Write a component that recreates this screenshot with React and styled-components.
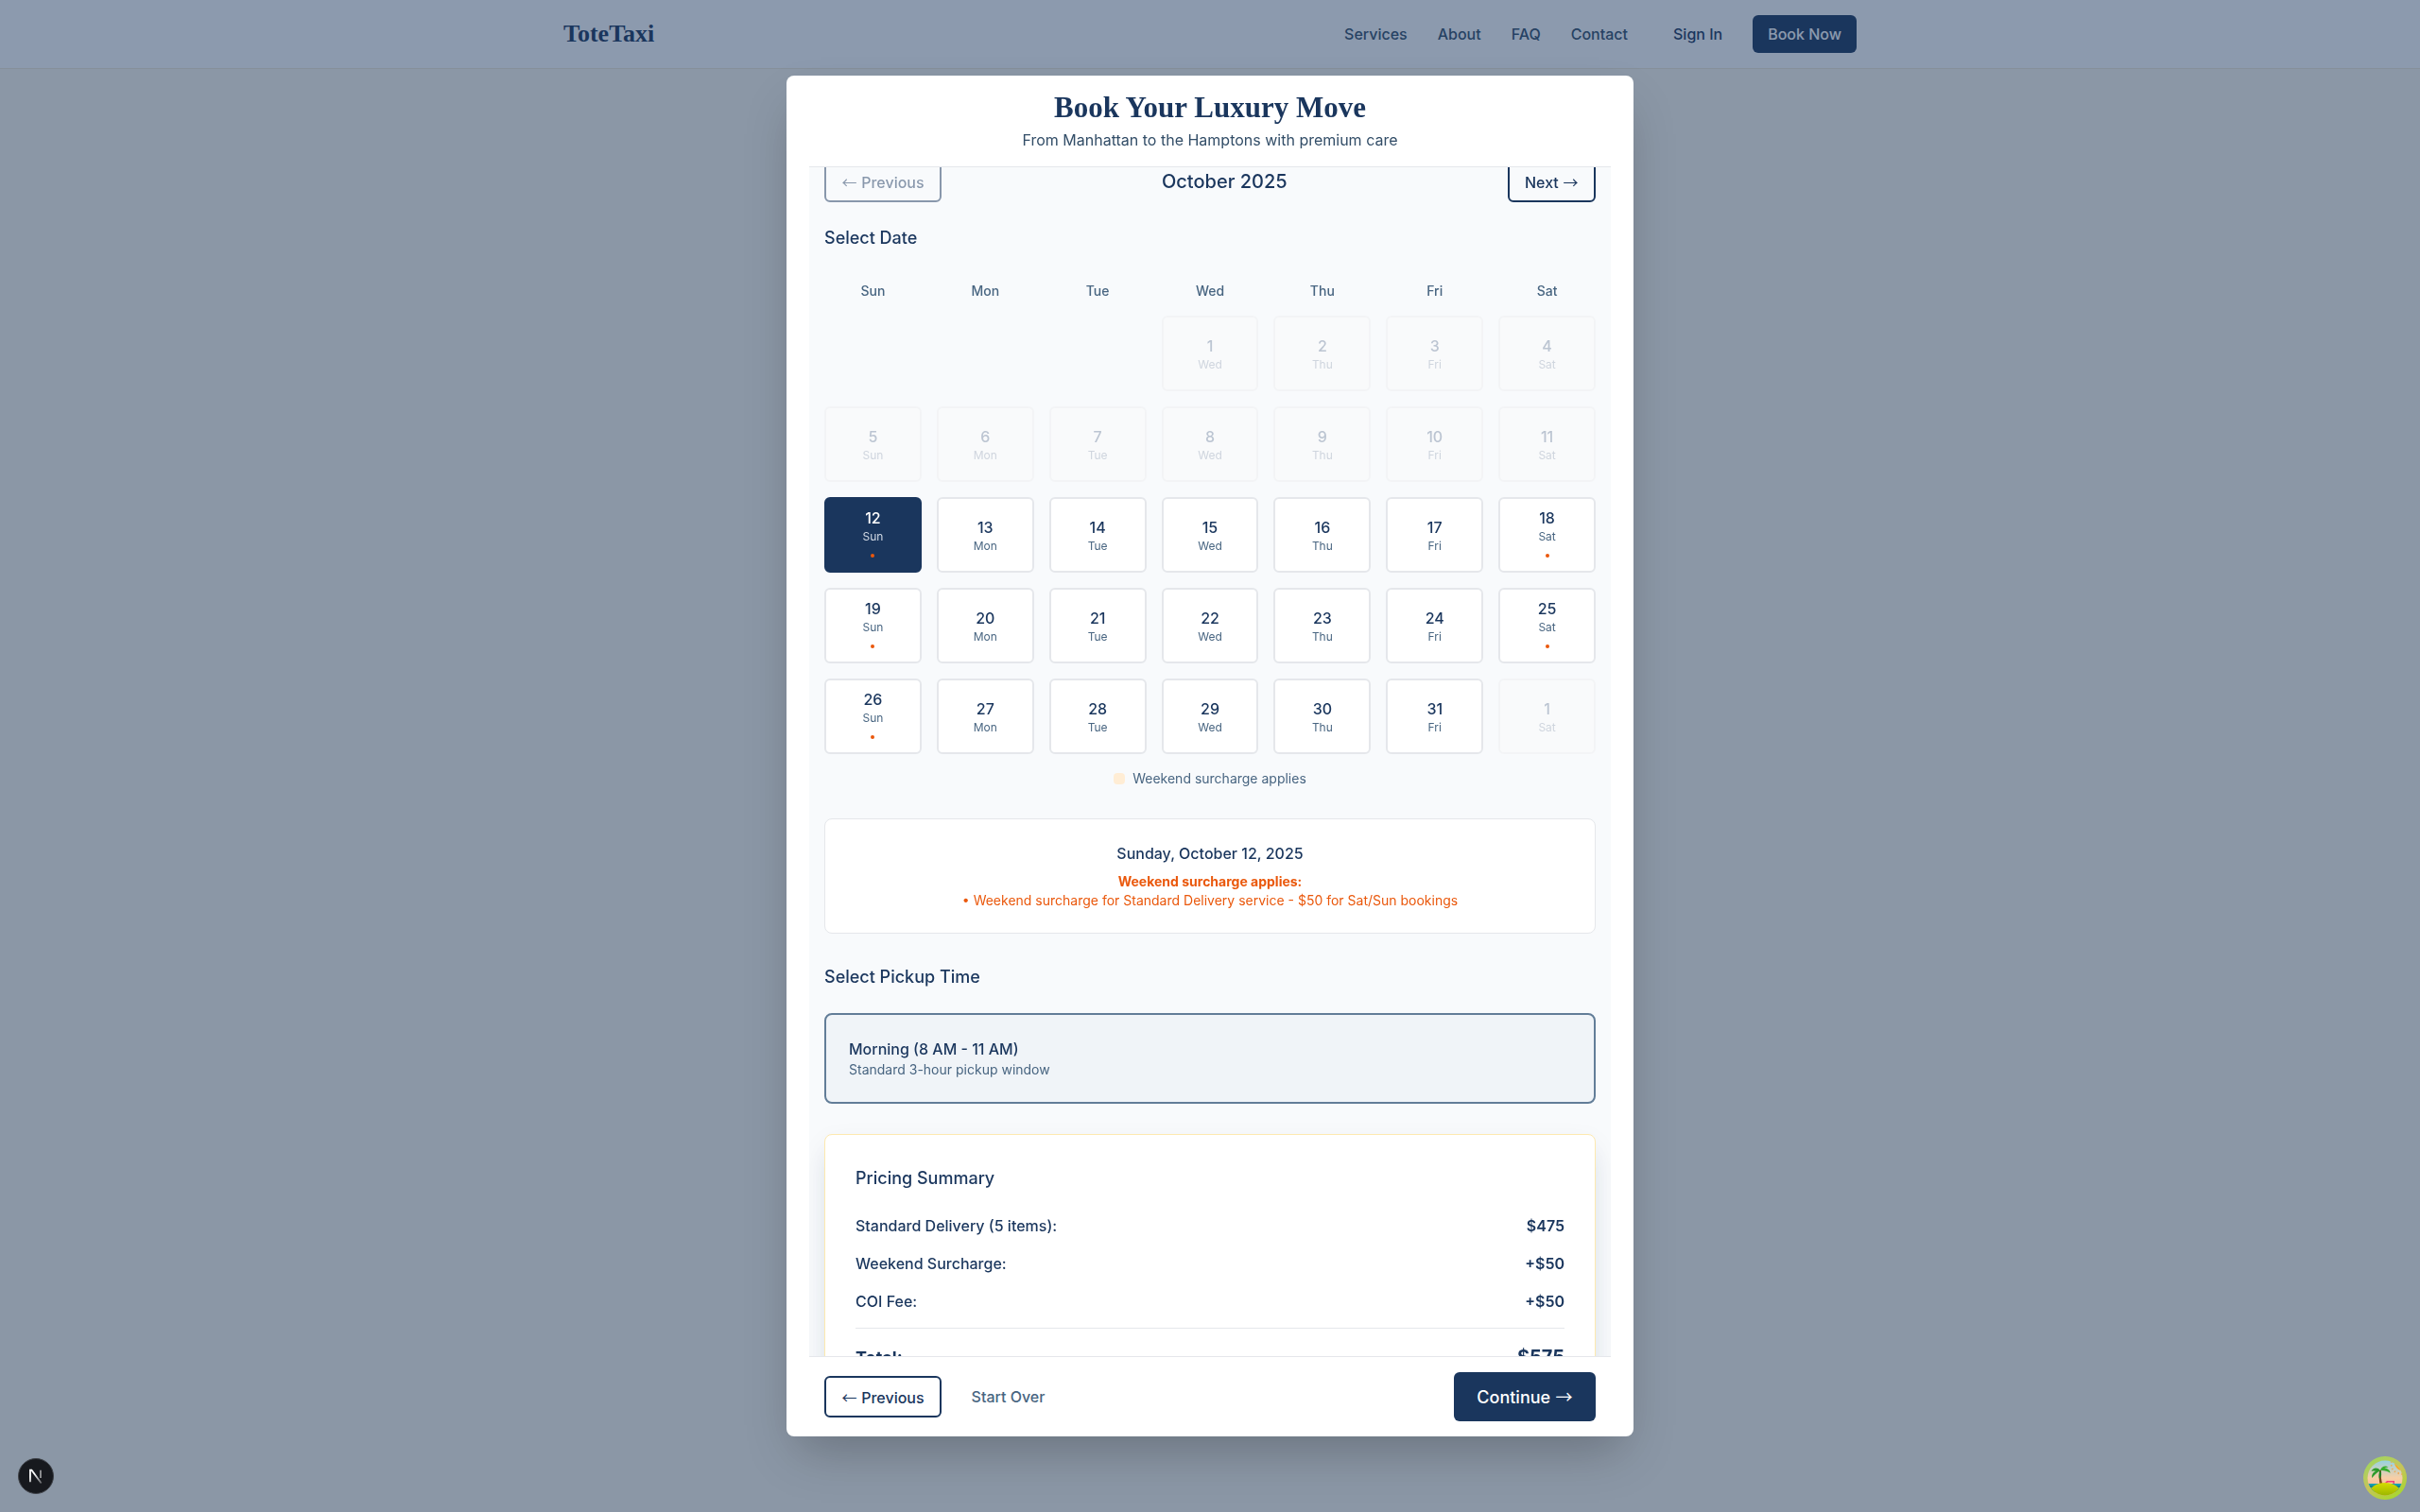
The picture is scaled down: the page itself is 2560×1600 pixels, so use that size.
import React from 'react';
import styled, { createGlobalStyle } from 'styled-components';

const GlobalStyle = createGlobalStyle`
  html, body {
    margin: 0;
    padding: 0;
    height: 100%;
    font-family: Inter, "Liberation Sans", sans-serif;
    color: #1a365d;
  }
  * {
    box-sizing: border-box;
  }
`;

/* ──────────────  Page behind the dialog  ────────────── */

const Page = styled.div`
  min-height: 1600px;
  background: #fdf9ee;
`;

const NavBar = styled.nav`
  height: 73px;
  background: #ffffff;
  border-bottom: 1px solid #f3e9d6;
`;

const NavInner = styled.div`
  width: 1400px;
  height: 72px;
  margin: 0 auto;
  padding: 0 16px;
  display: flex;
  align-items: center;
  justify-content: space-between;
`;

const Logo = styled.div`
  font-family: "Liberation Serif", serif;
  font-size: 26px;
  font-weight: 700;
  color: #1a365d;
`;

const NavLinks = styled.div`
  display: flex;
  align-items: center;
  gap: 32px;
`;

const NavLink = styled.a`
  font-size: 16px;
  font-weight: 500;
  line-height: 24px;
  color: #334e68;
`;

const NavActions = styled.div`
  display: flex;
  align-items: center;
  gap: 16px;
  margin-left: 32px;
`;

const SignIn = styled.a`
  padding: 8px 16px;
  font-size: 16px;
  font-weight: 500;
  line-height: 24px;
  color: #1a365d;
`;

const BookNow = styled.a`
  height: 40px;
  padding: 8px 16px;
  border-radius: 6px;
  background: #1a365d;
  color: #ffffff;
  font-size: 16px;
  font-weight: 500;
  line-height: 24px;
`;

const NavRight = styled.div`
  display: flex;
  align-items: center;
`;

/* ──────────────  Dialog  ────────────── */

const Overlay = styled.div`
  position: fixed;
  inset: 0;
  background: rgba(26, 54, 93, 0.5);
  display: flex;
  align-items: center;
  justify-content: center;
`;

const Modal = styled.div`
  width: 896px;
  height: 1440px;
  padding: 0 24px;
  background: #ffffff;
  border-radius: 8px;
  box-shadow: 0 25px 50px -12px rgba(0, 0, 0, 0.25);
  display: flex;
  flex-direction: column;
  overflow: hidden;
`;

const ModalHeader = styled.header`
  flex: none;
  height: 97px;
  padding-top: 16px;
  text-align: center;
  border-bottom: 1px solid #e5e7eb;
`;

const ModalTitle = styled.h1`
  margin: 0 0 4px;
  font-family: "Liberation Serif", serif;
  font-size: 31px;
  font-weight: 700;
  line-height: 36px;
  color: #1a365d;
`;

const ModalSubtitle = styled.p`
  margin: 0;
  font-size: 16px;
  line-height: 24px;
  color: #334e68;
`;

const ModalBody = styled.div`
  flex: 1;
  min-height: 0;
  overflow: hidden;
  background: #f8fafc;
`;

/* body is scrolled a little in the reference */
const BodyInner = styled.div`
  margin-top: -7px;
  padding: 0 16px;
`;

const MonthRow = styled.div`
  display: flex;
  align-items: center;
  justify-content: space-between;
  margin-bottom: 24px;
`;

const MonthLabel = styled.h3`
  margin: 0;
  font-size: 20px;
  font-weight: 500;
  line-height: 28px;
  color: #1a365d;
`;

// the arrows come from a fallback font, long and thin
const Arrow = styled.span`
  padding: 0 0.03em;
  font-family: "Noto Sans CJK JP", sans-serif;
  font-weight: 400;
`;

const OutlineButton = styled.button`
  height: 44px;
  padding: 0 16px;
  border: 2px solid #1a365d;
  border-radius: 6px;
  background: transparent;
  color: #1a365d;
  font-family: inherit;
  font-size: 16px;
  font-weight: 500;
  line-height: 24px;
  opacity: ${(p) => (p.$disabled ? 0.5 : 1)};
`;

const SectionTitle = styled.h3`
  margin: 0;
  font-size: 18px;
  font-weight: 500;
  line-height: 28px;
  color: #1a365d;
`;

const WeekHeader = styled.div`
  display: grid;
  grid-template-columns: repeat(7, 1fr);
  gap: 16px;
  margin: 32px 0 16px;
`;

const WeekDay = styled.div`
  text-align: center;
  font-size: 14px;
  font-weight: 500;
  line-height: 20px;
  color: #486581;
`;

const CalendarGrid = styled.div`
  display: grid;
  grid-template-columns: repeat(7, 1fr);
  grid-auto-rows: 80px;
  gap: 16px;
`;

const DayCell = styled.div`
  display: flex;
  flex-direction: column;
  align-items: center;
  justify-content: center;
  border-radius: 6px;
  border: 2px solid
    ${(p) => (p.$selected ? '#1a365d' : p.$disabled ? '#f3f4f6' : '#e5e7eb')};
  background: ${(p) =>
    p.$selected ? '#1a365d' : p.$disabled ? '#f9fafb' : '#ffffff'};
`;

const DayNumber = styled.div`
  font-size: 16px;
  font-weight: 500;
  line-height: 24px;
  color: ${(p) =>
    p.$selected ? '#ffffff' : p.$disabled ? '#bcc5d2' : '#1a365d'};
`;

const DayName = styled.div`
  font-size: 12px;
  line-height: 16px;
  color: ${(p) =>
    p.$selected ? '#d1d9e4' : p.$disabled ? '#cfd5de' : '#486581'};
`;

const DotRow = styled.div`
  height: 20px;
  padding-top: 10px;
`;

const Dot = styled.div`
  width: 4px;
  height: 4px;
  border-radius: 50%;
  background: #ea580c;
`;

const Legend = styled.div`
  display: flex;
  align-items: center;
  justify-content: center;
  gap: 8px;
  margin-top: 16px;
  font-size: 14px;
  line-height: 20px;
  color: #486581;
`;

const LegendSwatch = styled.span`
  width: 12px;
  height: 12px;
  border-radius: 4px;
  background: #ffedd5;
`;

const InfoBox = styled.div`
  margin: 32px 0;
  padding: 24px;
  background: #ffffff;
  border: 1px solid #e5e7eb;
  border-radius: 8px;
  text-align: center;
`;

const InfoDate = styled.div`
  margin-bottom: 8px;
  font-size: 16px;
  font-weight: 500;
  line-height: 24px;
  color: #1a365d;
`;

const InfoStrong = styled.div`
  font-size: 14px;
  font-weight: 700;
  line-height: 20px;
  color: #ea580c;
`;

const InfoLine = styled.div`
  font-size: 14px;
  line-height: 20px;
  color: #ea580c;
`;

const TimeOption = styled.div`
  margin: 24px 0 32px;
  padding: 24px;
  height: 96px;
  background: #f0f4f8;
  border: 2px solid #627d98;
  border-radius: 8px;
`;

const TimeTitle = styled.div`
  font-size: 16px;
  font-weight: 500;
  line-height: 24px;
  color: #1a365d;
`;

const TimeNote = styled.div`
  font-size: 14px;
  line-height: 20px;
  color: #486581;
`;

const PricingCard = styled.section`
  padding: 32px;
  background: #ffffff;
  border: 1px solid #fde9b0;
  border-radius: 8px;
  box-shadow: 0 20px 25px -5px rgba(26, 54, 93, 0.1),
    0 10px 30px 0 rgba(26, 54, 93, 0.06);
`;

const PriceRows = styled.div`
  display: flex;
  flex-direction: column;
  gap: 16px;
  margin-top: 24px;
`;

const PriceRow = styled.div`
  display: flex;
  justify-content: space-between;
  font-size: 16px;
  font-weight: 500;
  line-height: 24px;
  color: #1a365d;
`;

const PriceAmount = styled.span`
  font-weight: 600;
`;

const PriceTotal = styled.div`
  display: flex;
  justify-content: space-between;
  align-items: baseline;
  margin-top: 16px;
  padding-top: 16px;
  border-top: 1px solid #e5e7eb;
  font-size: 18px;
  font-weight: 700;
  line-height: 28px;
  color: #1a365d;
`;

const TotalAmount = styled.span`
  font-size: 20px;
`;

const ModalFooter = styled.footer`
  flex: none;
  height: 85px;
  padding: 16px;
  border-top: 1px solid #e5e7eb;
  background: #ffffff;
  display: flex;
  align-items: center;
  justify-content: space-between;
`;

const FooterLeft = styled.div`
  display: flex;
  align-items: center;
  gap: 16px;
`;

const GhostButton = styled.button`
  height: 44px;
  padding: 0 16px;
  border: none;
  background: transparent;
  color: #486581;
  font-family: inherit;
  font-size: 16px;
  font-weight: 500;
`;

const ContinueButton = styled.button`
  height: 52px;
  padding: 0 24px;
  border: none;
  border-radius: 6px;
  background: #1a365d;
  color: #ffffff;
  font-family: inherit;
  font-size: 18px;
  font-weight: 500;
  line-height: 28px;
`;

/* ──────────────  Corner badges  ────────────── */

const DevBadge = styled.div`
  position: fixed;
  left: 19px;
  bottom: 19px;
  width: 38px;
  height: 38px;
  border-radius: 50%;
  background: #17191e;
  border: 1px solid #3f4248;
  display: flex;
  align-items: center;
  justify-content: center;
`;

const HelperBadge = styled.div`
  position: fixed;
  right: 14px;
  bottom: 13px;
  width: 46px;
  height: 46px;
`;

const NextMark = () => (
  <svg width="22" height="22" viewBox="0 0 16 16" fill="none">
    <defs>
      <linearGradient id="nextFade" x1="7" y1="6" x2="13" y2="14" gradientUnits="userSpaceOnUse">
        <stop stopColor="#fff" />
        <stop offset="1" stopColor="#fff" stopOpacity="0.25" />
      </linearGradient>
    </defs>
    <path d="M3.6 12.6V3.4h1.1l7.4 10" stroke="url(#nextFade)" strokeWidth="1.3" />
    <path d="M11.6 3.4v6" stroke="#fff" strokeOpacity="0.6" strokeWidth="1.2" />
  </svg>
);

const IslandIcon = () => (
  <svg width="46" height="46" viewBox="0 0 46 46">
    <defs>
      <linearGradient id="rim" x1="0.2" y1="0" x2="0.8" y2="1">
        <stop offset="0" stopColor="#9fd65f" />
        <stop offset="0.5" stopColor="#c6c45a" />
        <stop offset="1" stopColor="#a4d92a" />
      </linearGradient>
      <linearGradient id="sky" x1="0" y1="0" x2="0" y2="1">
        <stop offset="0" stopColor="#7ed2ee" />
        <stop offset="0.5" stopColor="#f7cfa6" />
        <stop offset="1" stopColor="#ff9d86" />
      </linearGradient>
      <linearGradient id="hill" x1="0" y1="0" x2="0" y2="1">
        <stop offset="0" stopColor="#d6dc00" />
        <stop offset="1" stopColor="#6e9900" />
      </linearGradient>
      <clipPath id="disc">
        <circle cx="23" cy="23" r="18.5" />
      </clipPath>
    </defs>
    <circle cx="23" cy="23" r="23" fill="url(#rim)" />
    <g clipPath="url(#disc)">
      <rect x="0" y="0" width="46" height="46" fill="url(#sky)" />
      {/* sun with its rays */}
      <path d="M33 4c-1 6 3 11 10 12V4z" fill="#f7a823" />
      <path
        d="M29 6l1.5.5M29 10l1.5-.3M30 14l1.5-1M33 17l1-1.5M37 19l.4-2M41 20l-.1-2"
        stroke="#f3a64a"
        strokeWidth="1.3"
      />
      {/* sea */}
      <rect x="0" y="29" width="46" height="9" fill="#169fb3" />
      <path d="M0 32h46M0 35h46" stroke="#0b5f74" strokeWidth="1" />
      {/* deck chair */}
      <path d="M22 29l3-3h8v3h-1.500v-1.600h-5.500l-2 1.600z" fill="#ef3f7a" />
      {/* palm */}
      <path d="M17 15c-.6 5-.4 10 .6 15h2.800c-1.500-5-2-10-1.400-15z" fill="#7b4a1c" />
      <path d="M18 15c-3-4-8-3-9.500 1 3-1 4-.4 5-.2-3 1-5 4-4.200 7.200 2-3 4.500-5 8.700-8z" fill="#2c9a2a" />
      <path d="M18 15c1-4 5-5.500 8.500-3.500-2 0-3 .8-4 1.200 3 0 6 2 6 5-3-2-6.500-3-10.500-2.700z" fill="#36ad2e" />
      <path d="M18 15c-1.200 3-2 6-1 9 2-2 3-6 1-9z" fill="#1f8424" />
      {/* island */}
      <ellipse cx="23" cy="40" rx="17" ry="12" fill="url(#hill)" />
    </g>
  </svg>
);

/* ──────────────  Data  ────────────── */

const weekDays = ['Sun', 'Mon', 'Tue', 'Wed', 'Thu', 'Fri', 'Sat'];

// 35 cells, October 2025 starts on a Wednesday, the last one spills into November
const calendarDays = [
  null,
  null,
  null,
  ...Array.from({ length: 31 }, (_, i) => ({ day: i + 1, dow: (i + 3) % 7 })),
  { day: 1, dow: 6, spill: true },
].map((d) =>
  d && {
    ...d,
    disabled: d.spill || d.day < 12,
    selected: !d.spill && d.day === 12,
    weekend: !d.spill && d.day >= 12 && (d.dow === 0 || d.dow === 6),
  }
);

const priceRows = [
  { label: 'Standard Delivery (5 items):', amount: '$475' },
  { label: 'Weekend Surcharge:', amount: '+$50' },
  { label: 'COI Fee:', amount: '+$50' },
];

/* ──────────────  Component  ────────────── */

const App = () => (
  <>
    <GlobalStyle />
    <Page>
      <NavBar>
        <NavInner>
          <Logo>ToteTaxi</Logo>
          <NavRight>
            <NavLinks>
              <NavLink>Services</NavLink>
              <NavLink>About</NavLink>
              <NavLink>FAQ</NavLink>
              <NavLink>Contact</NavLink>
            </NavLinks>
            <NavActions>
              <SignIn>Sign In</SignIn>
              <BookNow>Book Now</BookNow>
            </NavActions>
          </NavRight>
        </NavInner>
      </NavBar>
    </Page>

    <Overlay>
      <Modal>
        <ModalHeader>
          <ModalTitle>Book Your Luxury Move</ModalTitle>
          <ModalSubtitle>From Manhattan to the Hamptons with premium care</ModalSubtitle>
        </ModalHeader>

        <ModalBody>
          <BodyInner>
            <MonthRow>
              <OutlineButton $disabled><Arrow>←</Arrow> Previous</OutlineButton>
              <MonthLabel>October 2025</MonthLabel>
              <OutlineButton>Next <Arrow>→</Arrow></OutlineButton>
            </MonthRow>

            <SectionTitle>Select Date</SectionTitle>

            <WeekHeader>
              {weekDays.map((d) => (
                <WeekDay key={d}>{d}</WeekDay>
              ))}
            </WeekHeader>

            <CalendarGrid>
              {calendarDays.map((d, i) =>
                d ? (
                  <DayCell key={i} $selected={d.selected} $disabled={d.disabled}>
                    <DayNumber $selected={d.selected} $disabled={d.disabled}>
                      {d.day}
                    </DayNumber>
                    <DayName $selected={d.selected} $disabled={d.disabled}>
                      {weekDays[d.dow]}
                    </DayName>
                    {d.weekend && (
                      <DotRow>
                        <Dot />
                      </DotRow>
                    )}
                  </DayCell>
                ) : (
                  <div key={i} />
                )
              )}
            </CalendarGrid>

            <Legend>
              <LegendSwatch />
              Weekend surcharge applies
            </Legend>

            <InfoBox>
              <InfoDate>Sunday, October 12, 2025</InfoDate>
              <InfoStrong>Weekend surcharge applies:</InfoStrong>
              <InfoLine>• Weekend surcharge for Standard Delivery service - $50 for Sat/Sun bookings</InfoLine>
            </InfoBox>

            <SectionTitle>Select Pickup Time</SectionTitle>

            <TimeOption>
              <TimeTitle>Morning (8 AM - 11 AM)</TimeTitle>
              <TimeNote>Standard 3-hour pickup window</TimeNote>
            </TimeOption>

            <PricingCard>
              <SectionTitle>Pricing Summary</SectionTitle>
              <PriceRows>
                {priceRows.map((r) => (
                  <PriceRow key={r.label}>
                    <span>{r.label}</span>
                    <PriceAmount>{r.amount}</PriceAmount>
                  </PriceRow>
                ))}
              </PriceRows>
              <PriceTotal>
                <span>Total:</span>
                <TotalAmount>$575</TotalAmount>
              </PriceTotal>
            </PricingCard>
          </BodyInner>
        </ModalBody>

        <ModalFooter>
          <FooterLeft>
            <OutlineButton><Arrow>←</Arrow> Previous</OutlineButton>
            <GhostButton>Start Over</GhostButton>
          </FooterLeft>
          <ContinueButton>Continue <Arrow>→</Arrow></ContinueButton>
        </ModalFooter>
      </Modal>
    </Overlay>

    <DevBadge>
      <NextMark />
    </DevBadge>
    <HelperBadge>
      <IslandIcon />
    </HelperBadge>
  </>
);

export default App;
